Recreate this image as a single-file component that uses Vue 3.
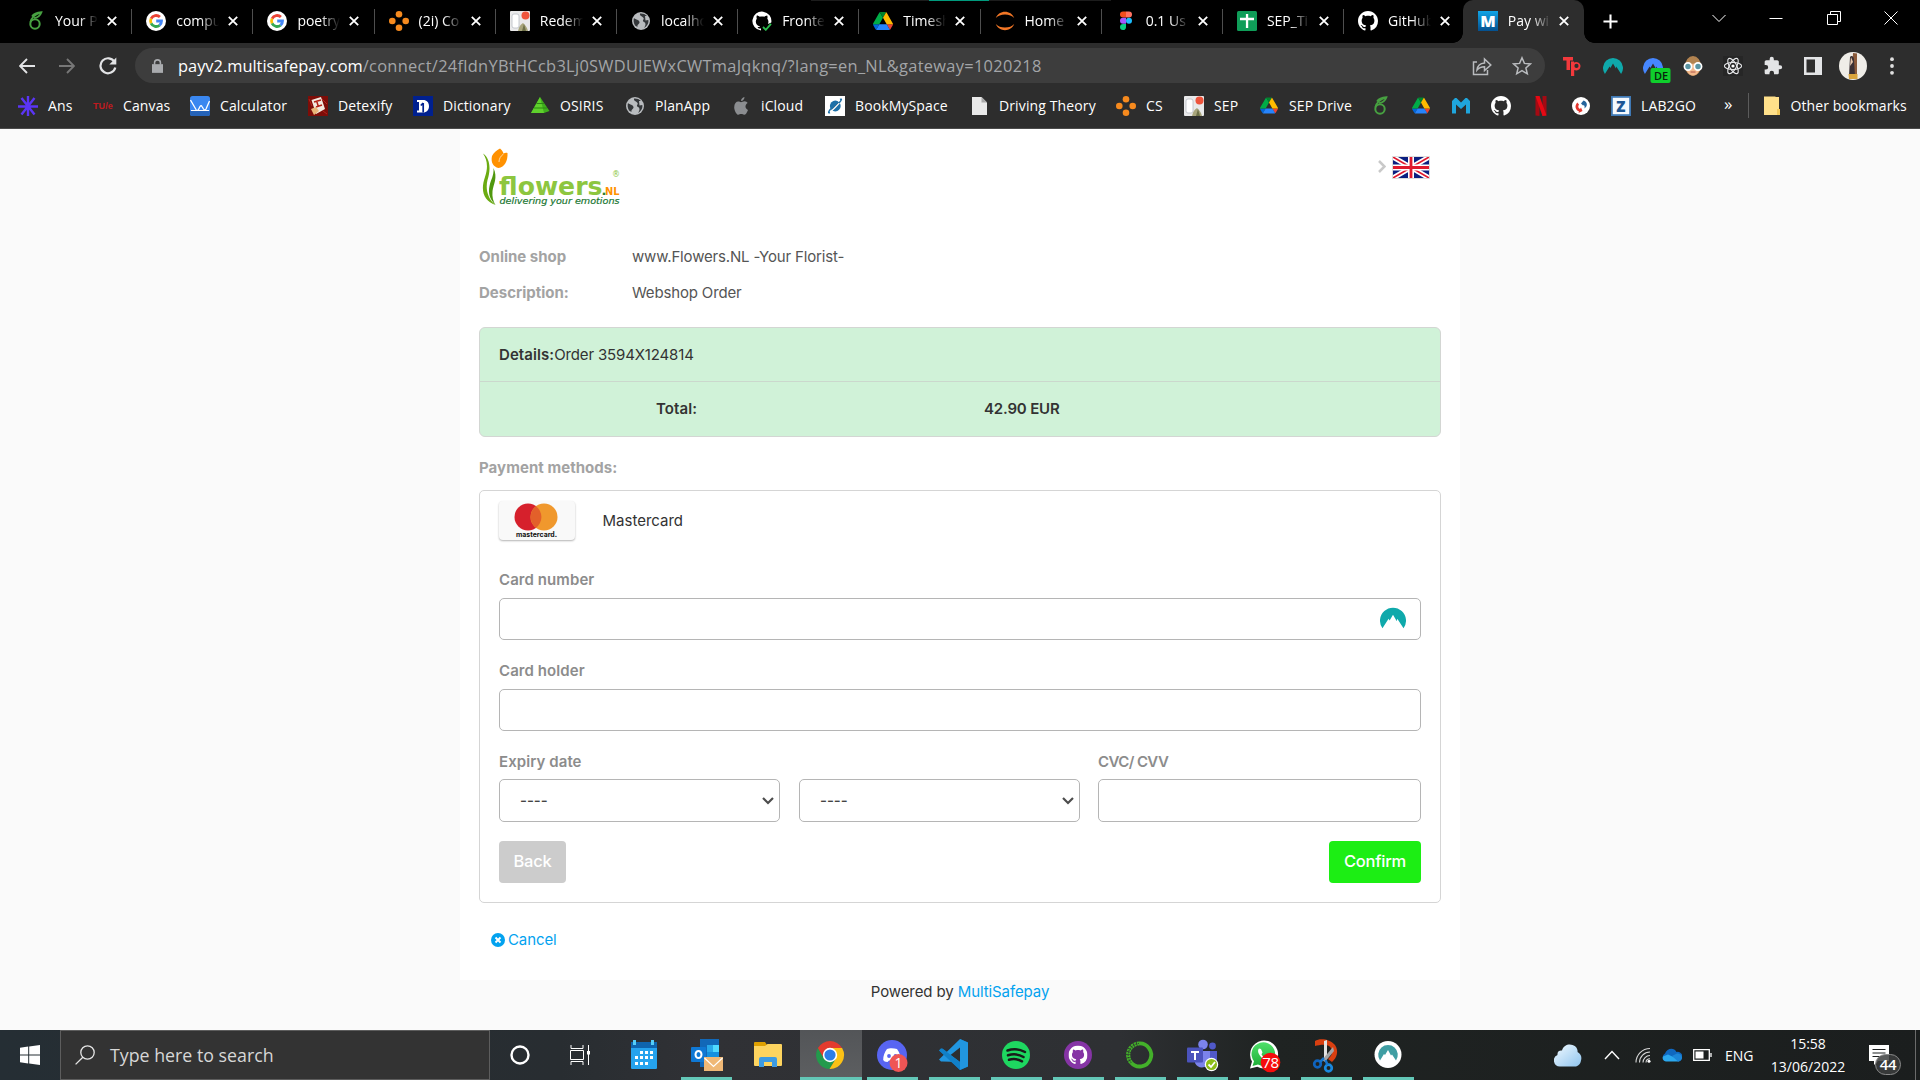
<script setup>
const tabs = [
  { icon: 'overleaf', title: 'Your P' },
  { icon: 'google', title: 'compu' },
  { icon: 'google', title: 'poetry' },
  { icon: 'canvas', title: '(2i) Co' },
  { icon: 'sep', title: 'Redem' },
  { icon: 'globe', title: 'localho' },
  { icon: 'ghcheck', title: 'Fronte' },
  { icon: 'drive', title: 'Timesh' },
  { icon: 'jupyter', title: 'Home' },
  { icon: 'figma', title: '0.1 Us' },
  { icon: 'sheets', title: 'SEP_Ti' },
  { icon: 'github', title: 'GitHub' },
  { icon: 'msp', title: 'Pay wi', active: true },
]

const bookmarks = [
  { icon: 'ans', label: 'Ans', width: 75 },
  { icon: 'tue', label: 'Canvas', width: 97 },
  { icon: 'calc', label: 'Calculator', width: 118 },
  { icon: 'detexify', label: 'Detexify', width: 105 },
  { icon: 'dict', label: 'Dictionary', width: 117 },
  { icon: 'osiris', label: 'OSIRIS', width: 95 },
  { icon: 'globe', label: 'PlanApp', width: 106 },
  { icon: 'apple', label: 'iCloud', width: 94 },
  { icon: 'space', label: 'BookMySpace', width: 144 },
  { icon: 'doc', label: 'Driving Theory', width: 147 },
  { icon: 'canvas', label: 'CS', width: 68 },
  { icon: 'sep', label: 'SEP', width: 75 },
  { icon: 'drive', label: 'SEP Drive', width: 111 },
  { icon: 'overleaf', width: 41 },
  { icon: 'drive', width: 40 },
  { icon: 'miro', width: 40 },
  { icon: 'github', width: 40 },
  { icon: 'netflix', width: 40 },
  { icon: 'sync', width: 40 },
  { icon: 'zed', label: 'LAB2GO', width: 110 },
]

const extensions = ['tp', 'nord', 'nordvpn', 'face', 'react', 'puzzle', 'panel']

const apps = [
  { icon: 'calendar' },
  { icon: 'outlook', open: true },
  { icon: 'explorer' },
  { icon: 'chrome', open: true, focused: true },
  { icon: 'discord', open: true },
  { icon: 'vscode', open: true },
  { icon: 'spotify', open: true },
  { icon: 'ghdesktop', open: true },
  { icon: 'anaconda', open: true },
  { icon: 'teams', open: true },
  { icon: 'whatsapp', open: true },
  { icon: 'snip', open: true },
  { icon: 'nordapp', open: true },
]

// Lettering that sits on top of an icon
const marks = { msp: 'M', tue: 'TU/e', zed: 'Z', nordvpn: 'DE', discord: '1', whatsapp: '78' }
</script>

<template>
  <div class="screen">
    <svg class="sprite" width="0" height="0" aria-hidden="true">
      <defs>
        <linearGradient id="g-msp" x1="0" y1="0" x2="0" y2="1"><stop offset="0" stop-color="#12a5e6" /><stop offset="1" stop-color="#04508f" /></linearGradient>
        <linearGradient id="g-cloud" x1="0" y1="0" x2="1" y2="1"><stop offset="0" stop-color="#f2faff" /><stop offset="1" stop-color="#8fc4ee" /></linearGradient>
        <linearGradient id="g-wa" x1="0" y1="0" x2="0" y2="1"><stop offset="0" stop-color="#4fe06a" /><stop offset="1" stop-color="#1faf38" /></linearGradient>
      </defs>

      <symbol id="overleaf" viewBox="0 0 20 20">
        <path d="M15 2C10.500 3 6 7 5.300 11.500M7 5.500C8.500 3 12 1.500 16.500 1.200C15.500 4 13 6.500 9 7" fill="none" stroke="#47a141" stroke-width="1.700" />
        <circle cx="10" cy="13" r="4.700" fill="none" stroke="#47a141" stroke-width="2" />
      </symbol>
      <symbol id="google" viewBox="0 0 20 20">
        <circle cx="10" cy="10" r="10" fill="#fff" />
        <g fill="none" stroke-width="2.800">
          <path d="M5.100 7.600A5.500 5.500 0 0 1 13.900 6.100" stroke="#ea4335" />
          <path d="M5.100 7.600A5.500 5.500 0 0 0 5.100 12.400" stroke="#fbbc05" />
          <path d="M5.100 12.400A5.500 5.500 0 0 0 13.600 14.200" stroke="#34a853" />
          <path d="M13.600 14.200A5.500 5.500 0 0 0 15.500 10H10.200" stroke="#4285f4" />
        </g>
      </symbol>
      <symbol id="canvas" viewBox="0 0 20 20">
        <g fill="#f68a1e"><circle cx="10" cy="3.300" r="3.300" /><circle cx="10" cy="16.700" r="3.300" /><circle cx="3.300" cy="10" r="3.300" /><circle cx="16.700" cy="10" r="3.300" /></g>
      </symbol>
      <symbol id="sep" viewBox="0 0 20 20">
        <rect width="20" height="20" rx="1" fill="#e9e9ea" />
        <rect x="2" y="3" width="7" height="14" rx="2" fill="#fff" stroke="#b9bcc4" stroke-width=".8" />
        <path d="M8 20C9 16 10 14 13 12C15 14 17 16 18 20Z" fill="#a8a57c" /><path d="M12 20L14 13L16 20Z" fill="#6d7048" />
        <circle cx="15.500" cy="4.500" r="4" fill="#ee543c" />
      </symbol>
      <symbol id="globe" viewBox="0 0 20 20">
        <circle cx="10" cy="10" r="9" fill="#b9bcbf" />
        <path d="M3 7C5 9 8 8.500 8.500 11C8.800 13 6 13 6.500 16L4 14.500C2.500 12 2.300 9 3 7ZM9 2.500C8.500 5 11 5 12.500 7C13.500 8.500 10.500 9.500 13 11C15 11.800 15 14 13 17C16 15.500 18 12 17.300 9L14.500 9.500L14 5L16 5C14 3 12 2.300 9 2.500Z" fill="#34373a" />
      </symbol>
      <symbol id="github" viewBox="0 0 16 16">
        <path fill="#fff" d="M8 0C3.580 0 0 3.580 0 8c0 3.540 2.290 6.530 5.470 7.590.4.070.55-.17.55-.38 0-.19-.01-.82-.01-1.490-2.010.37-2.530-.49-2.690-.94-.09-.23-.48-.94-.82-1.130-.28-.15-.68-.52-.01-.53.63-.01 1.080.58 1.230.82.72 1.210 1.870.87 2.330.66.07-.52.28-.87.51-1.070-1.780-.2-3.640-.89-3.640-3.950 0-.87.31-1.590.82-2.150-.08-.2-.36-1.020.08-2.120 0 0 .67-.21 2.200.82.64-.18 1.320-.27 2-.27s1.360.09 2 .27c1.530-1.040 2.200-.82 2.200-.82.44 1.100.16 1.920.08 2.120.51.56.82 1.270.82 2.150 0 3.070-1.870 3.750-3.650 3.950.29.25.54.73.54 1.480 0 1.070-.01 1.930-.01 2.200 0 .21.15.46.55.38A8 8 0 0 0 16 8c0-4.420-3.580-8-8-8z" />
      </symbol>
      <symbol id="ghcheck" viewBox="0 0 20 20">
        <path d="M9 19.500A9.500 9.500 0 1 1 19.300 11.500L16 13C17 10 16 8.500 15.300 7.700C15.600 6.500 15.600 5.500 15.200 4.500C14 4.500 13 5.300 12.400 5.700C11 5.300 9 5.300 7.700 5.700C7 5.200 6 4.500 4.800 4.500C4.500 5.500 4.400 6.500 4.800 7.700C3 10 3.500 14.500 8 15.200C7.500 16 7 16.300 5.500 16C6.500 17.500 7 17.800 9 17.500Z" fill="#fff" />
        <path d="M11 16L13.800 18.800L19 12.800" fill="none" stroke="#2cbe4e" stroke-width="1.800" />
      </symbol>
      <symbol id="drive" viewBox="0 0 87.300 78">
        <path d="m6.600 66.850 3.850 6.650c.8 1.400 1.950 2.500 3.300 3.300l13.750-23.800h-27.500c0 1.550.4 3.100 1.200 4.500z" fill="#0066da" />
        <path d="m43.650 25-13.750-23.800c-1.350.8-2.500 1.900-3.300 3.300l-25.400 44a9.060 9.060 0 0 0-1.200 4.500h27.500z" fill="#00ac47" />
        <path d="m73.550 76.800c1.350-.8 2.500-1.900 3.300-3.300l1.600-2.750 7.650-13.250c.8-1.400 1.200-2.950 1.200-4.500h-27.500l5.850 11.500z" fill="#ea4335" />
        <path d="m43.650 25 13.750-23.800c-1.350-.8-2.900-1.200-4.500-1.200h-18.500c-1.600 0-3.150.45-4.500 1.200z" fill="#00832d" />
        <path d="m59.800 53h-32.300l-13.750 23.800c1.350.8 2.900 1.200 4.500 1.200h50.800c1.600 0 3.150-.45 4.500-1.200z" fill="#2684fc" />
        <path d="m73.400 26.500-12.700-22c-.8-1.400-1.950-2.500-3.300-3.300l-13.750 23.800 16.150 28h27.450c0-1.550-.4-3.100-1.200-4.500z" fill="#ffba00" />
      </symbol>
      <symbol id="jupyter" viewBox="0 0 20 20">
        <path d="M.8 7C2.500 3 6 .8 10 .8S17.500 3 19.200 7C17 4.600 14 3.400 10 3.400S3 4.600.8 7ZM.8 13C2.500 17 6 19.200 10 19.200S17.500 17 19.200 13C17 15.400 14 16.600 10 16.600S3 15.400.8 13Z" fill="#f37726" />
      </symbol>
      <symbol id="figma" viewBox="0 0 20 20">
        <path d="M7 0.500H10V6.500H7A3 3 0 0 1 7 .5Z" fill="#f24e1e" /><path d="M10 .5H13A3 3 0 0 1 13 6.500H10Z" fill="#ff7262" />
        <path d="M7 6.800H10V12.800H7A3 3 0 0 1 7 6.800Z" fill="#a259ff" /><circle cx="13" cy="9.800" r="3" fill="#1abcfe" /><path d="M7 13H10V16.200A3 3 0 1 1 7 13Z" fill="#0acf83" />
      </symbol>
      <symbol id="sheets" viewBox="0 0 20 20"><rect width="20" height="20" rx="1.500" fill="#0f9d58" /><path d="M8.900 3H11.200V6.800H17V9.200H11.200V17H8.900V9.200H3V6.800H8.900Z" fill="#fff" /></symbol>
      <symbol id="msp" viewBox="0 0 20 20"><rect width="20" height="20" fill="url(#g-msp)" /></symbol>
      <symbol id="ans" viewBox="0 0 20 20"><path d="M10 0V20M0 10.500H20M3.500 2L16.500 18.500M16.500 2L3.500 18.500" stroke="#5b35f5" stroke-width="2.400" /></symbol>
      <symbol id="calc" viewBox="0 0 20 20"><rect width="20" height="20" rx="2.500" fill="#3a87f0" /><path d="M0 15H20V17.500A2.500 2.500 0 0 1 17.500 20H2.500A2.500 2.500 0 0 1 0 17.500Z" fill="#2563b8" /><path d="M.5 4L6 13.500C7 15 8 14.500 8.500 13.500L10 10.500C10.700 9.500 11.500 9.500 12 10.500L13.500 13C14.500 14.500 15.500 14 16 13L19.500 5" fill="none" stroke="#fff" stroke-width="1.300" /><path d="M1 14.500H19" stroke="#fff" stroke-width="1" /></symbol>
      <symbol id="detexify" viewBox="0 0 20 20"><rect width="20" height="20" fill="#7d0d08" /><path d="M3.500 4L13 1L17 13L8 18Z" fill="#f3e9df" /><path d="M6 6L13 4M8.500 4.500L10.500 11M8 11L14 9" stroke="#b22218" stroke-width="1.500" /><path d="M3 13L8 11L11 15L6 19Z" fill="#e9b678" /><path d="M14 3L19 8M15 15L19 18M1 3L4 10" stroke="#b5241c" stroke-width="1" /></symbol>
      <symbol id="dict" viewBox="0 0 20 20"><rect width="20" height="20" fill="#00208f" /><path d="M4 4H10C13.800 4 16 6.500 16 10.200S13.800 16.500 10 16.500H4V14.500H6V6H4Z" fill="#fff" /><path d="M10.200 7V16.500M7.800 9.500L10.200 7" fill="none" stroke="#00208f" stroke-width="1.700" /></symbol>
      <symbol id="osiris" viewBox="0 0 20 20"><path d="M10 1L19.500 15L14 17H1Z" fill="#3fae1d" /><path d="M10 1L1 17H14Z" fill="#5fd02c" /><path d="M6.500 7.500H14M4 12H17" stroke="#2c8a12" stroke-width="1" /></symbol>
      <symbol id="apple" viewBox="0 0 20 20"><path d="M13.500 1C13.500 3 12 5 10 5C10 3 11.500 1.500 13.500 1ZM10 6.300C11 6.300 12 5.300 13.600 5.300C15 5.300 16 6 16.600 7C13.500 9 14 12.600 17 13.900C16 16.500 14.600 18.800 13.200 18.800C12 18.800 11.600 18.100 10.200 18.100S8.300 18.800 7.300 18.800C5.500 18.800 3.200 14.500 3.200 11.200C3.200 7.500 5.300 5.600 7.200 5.600C8.400 5.600 9.200 6.300 10 6.300Z" fill="#8b8d90" /></symbol>
      <symbol id="space" viewBox="0 0 20 20"><rect width="20" height="20" fill="#fff" /><circle cx="10.300" cy="10" r="5.400" fill="#1d70a8" /><path d="M3.500 17C6 16 14 8 17 3.500" stroke="#fff" stroke-width="1.300" /><path d="M6 12.500C3 16 3 17.500 5 16.500M14 7C17 3.500 17 2.500 15 3.500" fill="none" stroke="#1d70a8" stroke-width="1.400" /></symbol>
      <symbol id="doc" viewBox="0 0 20 20"><path d="M3 1H12.500L18 6.500V19H3Z" fill="#e9e9e9" /><path d="M12.500 1L18 6.500H12.500Z" fill="#a9a9a9" /></symbol>
      <symbol id="miro" viewBox="0 0 20 20"><path d="M1 17.500V5L4 2H5.500L10 6.500L14.500 2H16L19 5V17.500H15V8.500L10 13L5 8.500V17.500Z" fill="#1fa6dd" /></symbol>
      <symbol id="netflix" viewBox="0 0 20 20"><path d="M4.500 0H8.500V20L4.500 19.500Z" fill="#a50a13" /><path d="M11.500 0H15.500V19.500L11.500 20Z" fill="#a50a13" /><path d="M4.500 0H8.500L15.500 19.500L11.500 20Z" fill="#e50914" /></symbol>
      <symbol id="sync" viewBox="0 0 20 20"><circle cx="10" cy="10" r="9" fill="#fff" /><path d="M12.500 4.500L10 7.500L12 9.500C13 8.500 14 9.500 13.500 12.500C17.500 9.500 16 5.500 12.500 4.500Z" fill="#24649c" /><path d="M6.300 6.500C3.500 9.500 4 13.500 8 15.500L7.500 17L11.500 15L10 11.500L9 13C7.500 12 6.500 10.500 8 8.500Z" fill="#e3342c" /></symbol>
      <symbol id="zed" viewBox="0 0 20 20"><rect width="20" height="20" fill="#b9d4ec" /><rect x=".9" y=".9" width="18.200" height="18.200" fill="#f5f9fd" stroke="#3f79b5" stroke-width="1.800" /></symbol>
      <symbol id="folder" viewBox="0 0 20 20"><path d="M2 .5H13.500V1H17V13H18V19H2Z" fill="#ffe08a" /><path d="M15 13H18V19H15Z" fill="#f3c95a" /></symbol>

      <symbol id="tp" viewBox="0 0 20 20"><path d="M0 1H10V4.500H7V14H3.500V4.500H0Z" fill="#f2393c" /><path d="M8 5.500H11V6.500A4.300 4.300 0 1 1 11.200 14V20H8ZM13.500 7.800A2 2 0 1 0 13.500 12A2 2 0 1 0 13.500 7.800Z" fill="#f2393c" fill-rule="evenodd" /></symbol>
      <symbol id="nord" viewBox="0 0 20 20"><path d="M1.900 17.900A10 10 0 1 1 18.100 17.900L13.300 10.500L12.900 12.500L10 7.500L7.400 12L6.600 10.600Z" fill="#0fa9ab" /></symbol>
      <symbol id="nordvpn" viewBox="0 0 28 28"><path d="M1.900 17.900A10 10 0 1 1 18.100 17.900L13.300 10.500L12.900 12.500L10 7.500L7.400 12L6.600 10.600Z" fill="#4687ff" /><rect x="7.500" y="12" width="20" height="15" rx="2" fill="#0fcf2c" /></symbol>
      <symbol id="face" viewBox="0 0 20 20"><ellipse cx="10" cy="10" rx="8" ry="10" fill="#b28350" /><path d="M3.500 9C8 8 13 6 16.500 9V13C16 17 13 19.500 10 19.500S4 17 3.500 13Z" fill="#f3b98c" /><circle cx="5" cy="10.500" r="3.600" fill="#5b95a3" stroke="#fff" stroke-width="1.700" /><circle cx="15" cy="10.500" r="3.600" fill="#5b95a3" stroke="#fff" stroke-width="1.700" /><path d="M7.500 16H12.500" stroke="#b0554a" stroke-width="1" /></symbol>
      <symbol id="react" viewBox="0 0 20 20"><rect width="20" height="20" fill="#262626" /><g fill="none" stroke="#e9eaec" stroke-width="1.100"><ellipse cx="10" cy="10" rx="8.600" ry="3.500" /><ellipse cx="10" cy="10" rx="8.600" ry="3.500" transform="rotate(60 10 10)" /><ellipse cx="10" cy="10" rx="8.600" ry="3.500" transform="rotate(120 10 10)" /></g><circle cx="10" cy="10" r="1.600" fill="#fff" /></symbol>
      <symbol id="puzzle" viewBox="0 0 24 24"><path fill="#e3e4e6" d="M20.500 11H19V7c0-1.100-.9-2-2-2h-4V3.500a2.500 2.500 0 0 0-5 0V5H4c-1.100 0-2 .9-2 2v3.800h1.500a2.700 2.700 0 0 1 0 5.400H2V20c0 1.100.9 2 2 2h3.800v-1.500a2.700 2.700 0 0 1 5.400 0V22H17c1.100 0 2-.9 2-2v-4h1.500a2.500 2.500 0 0 0 0-5z" /></symbol>
      <symbol id="panel" viewBox="0 0 20 20"><path d="M1 1H19V19H1ZM3.500 3.500V16.500H12V3.500Z" fill="#e3e4e6" fill-rule="evenodd" /></symbol>

      <symbol id="calendar" viewBox="0 0 36 36"><path d="M5 5H31V13H5Z" fill="#0f64ad" /><path d="M5 11H31V30A1.500 1.500 0 0 1 29.500 32H6.500A1.500 1.500 0 0 1 5 30Z" fill="#25a3ee" /><path d="M8.500 3V8M26.500 3V8" stroke="#55cdf7" stroke-width="3" /><g fill="#fff"><path d="M14 14h3v3h-3zM19 14h3v3h-3zM24 14h3v3h-3zM9 19h3v3h-3zM14 19h3v3h-3zM19 19h3v3h-3zM24 19h3v3h-3zM9 25h3v3h-3zM14 25h3v3h-3zM19 25h3v3h-3z" /></g></symbol>
      <symbol id="outlook" viewBox="0 0 36 36"><path d="M12 2H31V30H12Z" fill="#1268b8" /><path d="M19 8H25V15H19Z" fill="#28a8ea" /><path d="M25 8H31V15H25Z" fill="#50d9ff" /><path d="M19 15H31V22H19Z" fill="#1490df" /><rect x="3" y="10" width="15" height="15" rx="1" fill="#0f78d4" /><ellipse cx="10.500" cy="17.500" rx="3" ry="3.600" fill="none" stroke="#fff" stroke-width="2" /><path d="M16 20H35V34H16Z" fill="#efb876" /><path d="M16.500 21L25.500 29.500L34.500 21" fill="none" stroke="#fff" stroke-width="1.200" /></symbol>
      <symbol id="explorer" viewBox="0 0 36 36"><path d="M4 6A1 1 0 0 1 5 5H15L17 8V10H4Z" fill="#dfa000" /><path d="M4 9H15L17.500 7H31A1 1 0 0 1 32 8V28A1 1 0 0 1 31 29H5A1 1 0 0 1 4 28Z" fill="#fdd45f" /><path d="M9 30V22A2 2 0 0 1 11 20H25A2 2 0 0 1 27 22V30H22V25H14V30Z" fill="#3d9be2" /></symbol>
      <symbol id="chrome" viewBox="0 0 36 36"><path d="M5.900 11A14 14 0 0 1 30.100 11H18Z" fill="#e33b2e" /><path d="M5.900 11A14 14 0 0 0 17.500 32L24 21.500H12Z" fill="#239a4c" /><path d="M18 11H30.100A14 14 0 0 1 17.500 32L24 21.500Z" fill="#fbc116" /><path d="M5.900 11L12 21.500L18 11Z" fill="#e33b2e" /><circle cx="18" cy="18" r="7.200" fill="#fff" /><circle cx="18" cy="18" r="5.600" fill="#2c7de8" /></symbol>
      <symbol id="discord" viewBox="0 0 36 36"><circle cx="18" cy="18" r="15" fill="#5865f2" /><path d="M13 12C15 11 20 11 23 12C26 16 27 20 26.500 23.500C24.500 25 23 25.300 22.500 25L21.500 23.500H15L13.500 25C11 25 10 24 9.200 23C9.200 19 10.500 15 13 12Z" fill="#fff" /><circle cx="15" cy="19" r="1.900" fill="#5865f2" /><circle cx="21.500" cy="19" r="1.900" fill="#5865f2" /><circle cx="24.500" cy="26" r="9" fill="#ef5555" /></symbol>
      <symbol id="vscode" viewBox="0 0 36 36"><path d="M24 2L32 5.500V29.500L24 33L5 15L3 13.500L5 11.500H6.500L24 25Z" fill="#0a72b8" /><path d="M24 2L32 5.500V29.500L24 33V25L6.500 24.500H5L3 22.500L24 2Z" fill="#2196e0" /><path d="M24 10.500V25L14.500 18Z" fill="#2c2e31" /><path d="M3 13.500L5 11.500L7 12L24 25V33L3 13.500Z" fill="#1180c8" /></symbol>
      <symbol id="spotify" viewBox="0 0 36 36"><circle cx="18" cy="18" r="14" fill="#1ed760" /><path d="M9.500 13.500C15 11.500 22 12.300 27 15M10 18.300C15 16.800 21 17.300 25.500 20M11 22.800C15.500 21.500 20 22 24 24.300" fill="none" stroke="#191c1a" stroke-width="2.500" stroke-linecap="round" /></symbol>
      <symbol id="ghdesktop" viewBox="0 0 36 36"><circle cx="18" cy="18" r="14" fill="#8534a5" /><use href="#github" x="8.500" y="8.500" width="19" height="19" /></symbol>
      <symbol id="anaconda" viewBox="0 0 36 36"><path d="M17 6.500A11.500 11.500 0 1 1 9 25.500" fill="none" stroke="#43b02a" stroke-width="3.800" /><path d="M9 25.500A11.500 11.500 0 0 1 17 6.500" fill="none" stroke="#43b02a" stroke-width="4.200" stroke-dasharray="2.200 .7" /><path d="M9 25.500A11.500 11.500 0 0 1 17 6.500" fill="none" stroke="#2c2e30" stroke-width="1" stroke-dasharray="1.200 1.200" /></symbol>
      <symbol id="teams" viewBox="0 0 36 36"><circle cx="19" cy="7.500" r="4.800" fill="#7b83eb" /><circle cx="28.500" cy="9" r="3.400" fill="#5059c9" /><path d="M24 14H33V22A6 6 0 0 1 24 27Z" fill="#5059c9" /><path d="M11 14H26V24A8 8 0 0 1 11 26Z" fill="#7b83eb" /><rect x="3" y="10.500" width="16" height="15" rx="1" fill="#4b53bc" /><path d="M7 14H15V16H12V23H10V16H7Z" fill="#fff" /><circle cx="27.500" cy="27.500" r="6.700" fill="#fff" /><circle cx="27.500" cy="27.500" r="5.500" fill="#8cbd18" /><path d="M24.500 27.500L27 30L31 25" fill="none" stroke="#fff" stroke-width="1.800" /></symbol>
      <symbol id="whatsapp" viewBox="0 0 36 36"><path d="M4 31.500L6 24.500A14 14 0 1 1 11.300 29.700Z" fill="#fff" /><path d="M6.500 29L8 24.300A11.800 11.800 0 1 1 12 27.600Z" fill="url(#g-wa)" /><path d="M13 11.500C11 13.500 12.500 17.500 15.500 20.500S22 25 24 22.500L21 20L19 21C17.500 20.300 16 18.500 15.500 17.300L16.500 15.500L15 12Z" fill="#fff" /><circle cx="24.500" cy="25.500" r="9.800" fill="#f60c0c" /></symbol>
      <symbol id="snip" viewBox="0 0 36 36"><path d="M7 4C12 .5 22 2 27 8C31 14 29 21 24 25L20 22C26 17 25 11 20 8.500C16 7 11 8 7 9Z" fill="#d93f10" /><path d="M16 4L19 3V23L16 24Z" fill="#e2e2e2" /><path d="M25 10L14 23L17 25L26 14Z" fill="#a4a4a6" /><circle cx="9.500" cy="27" r="3.300" fill="none" stroke="#0f63bd" stroke-width="2.700" /><circle cx="20.500" cy="31" r="3.300" fill="none" stroke="#1989df" stroke-width="2.700" /><path d="M12 25L16 21M19.500 28L17.500 23" stroke="#1674cc" stroke-width="2.500" /></symbol>
      <symbol id="nordapp" viewBox="0 0 36 36"><circle cx="18" cy="17.500" r="13.500" fill="#fff" /><path d="M10 23.500A9.800 9.800 0 1 1 26 23.500L22 17.500L21 18.500L18 13L15 18L14 17Z" fill="#3f9ea3" /></symbol>
    </svg>

    <header class="tabstrip">
      <div v-for="(tab, i) in tabs" :key="i" class="tab" :class="{ active: tab.active, before: i === 11 }">
        <span class="icon favicon" :class="'i-' + tab.icon">
          <svg><use :href="'#' + tab.icon" /></svg>
          <i v-if="marks[tab.icon]" class="mark">{{ marks[tab.icon] }}</i>
        </span>
        <span class="tab-title">{{ tab.title }}</span>
        <svg class="tab-close" viewBox="0 0 10 10"><path d="M.8.800L9.200 9.200M9.200.800L.8 9.200" /></svg>
      </div>
      <svg class="new-tab" viewBox="0 0 16 16"><path d="M8 .5V15.500M.5 8H15.500" /></svg>
      <div class="window-buttons">
        <svg viewBox="0 0 14 14"><path d="M.5 4L7 10.500L13.500 4" /></svg>
        <svg viewBox="0 0 14 14"><path d="M.5 7.500H13.500" /></svg>
        <svg viewBox="0 0 14 14"><path d="M.5 3.500H10.500V13.500H.5ZM3.500 3.500V.5H13.500V10.500H10.500" /></svg>
        <svg viewBox="0 0 14 14"><path d="M.5.500L13.500 13.500M13.500.500L.5 13.500" /></svg>
      </div>
    </header>

    <div class="toolbar">
      <svg class="nav" viewBox="0 0 16 16"><path d="M16 8H1.500M8 1L1 8L8 15" /></svg>
      <svg class="nav dim" viewBox="0 0 16 16"><path d="M0 8H14.500M8 1L15 8L8 15" /></svg>
      <svg class="nav reload" viewBox="0 0 18 18"><path d="M15.500 5A7.500 7.500 0 1 0 16.300 10.500" /><path d="M17.300.5V7.500H10.300Z" class="solid" /></svg>
      <div class="omnibox">
        <svg class="lock" viewBox="0 0 12 15"><path d="M0 5.500H12V15H0Z" fill="#a9abae" /><path d="M2.800 6V4A3.200 3.200 0 0 1 9.200 4V6" fill="none" stroke="#a9abae" stroke-width="1.700" /></svg>
        <span class="url"><b>payv2.multisafepay.com</b><span class="path">/connect/24fldnYBtHCcb3Lj0SWDUlEWxCWTmaJqknq/?lang=en_NL&amp;gateway=1020218</span></span>
        <svg class="share" viewBox="0 0 20 20"><path d="M5 6H1.500V18.500H15.500V14M5 14C5.500 9.500 8 7.300 12.500 7V3L18.800 9L12.500 14.500V10.700C9 10.700 7 11.500 5 14Z" /></svg>
        <svg class="star" viewBox="0 0 20 20"><path d="M10 1.800L12.400 7.400L18.500 7.900L13.900 11.900L15.300 17.800L10 14.700L4.700 17.800L6.100 11.900L1.500 7.900L7.600 7.400Z" /></svg>
      </div>
      <div class="extensions">
        <span v-for="ext in extensions" :key="ext" class="icon ext" :class="'i-' + ext">
          <svg><use :href="'#' + ext" /></svg>
          <i v-if="marks[ext]" class="mark">{{ marks[ext] }}</i>
        </span>
      </div>
      <svg class="avatar" viewBox="0 0 28 28"><circle cx="14" cy="14" r="14" fill="#efede8" /><path d="M14 1L18 1.500V25H13Z" fill="#8b5a3a" /><path d="M11 5C12.500 3 15 4 15 8L16 24H10Z" fill="#3a3034" /><path d="M9.500 22H18.500V27H10Z" fill="#d9a43c" /><path d="M12 5L14 10L11 14Z" fill="#e8c9ae" /></svg>
      <svg class="menu" viewBox="0 0 4 18"><circle cx="2" cy="2.200" r="1.900" /><circle cx="2" cy="9" r="1.900" /><circle cx="2" cy="15.800" r="1.900" /></svg>
    </div>

    <nav class="bookmarks">
      <div v-for="(b, i) in bookmarks" :key="i" class="bookmark" :style="{ width: b.width + 'px' }">
        <span class="icon favicon" :class="'i-' + b.icon">
          <svg v-if="b.icon !== 'tue'"><use :href="'#' + b.icon" /></svg>
          <i v-if="marks[b.icon]" class="mark">{{ marks[b.icon] }}</i>
        </span>
        <span v-if="b.label">{{ b.label }}</span>
      </div>
      <span class="overflow">»</span>
      <div class="bookmark other">
        <span class="icon favicon"><svg><use href="#folder" /></svg></span>
        <span>Other bookmarks</span>
      </div>
    </nav>

    <main class="page">
      <section class="sheet">
        <div class="shop-header">
          <svg class="logo" width="140" height="62" viewBox="0 0 140 62">
            <path d="M2 5.500C10 11 9.500 23 6.500 32C4.500 40 6 50 14.500 57C3 53-1 43 4 29C7.500 19 6 11 2 5.500Z" fill="#6bab12" />
            <path d="M12.500 20C17 30 12.500 36 11.500 43C11 49 12 53 14.500 57C8.500 51 7 45 8.500 38C10 31 13 28 12.500 20Z" fill="#4f980e" />
            <path d="M19 .5C21 2.500 22 3.500 22.500 5.500C24 4.500 25.500 4.500 26.500 5C27 12.500 23.500 19.500 17.500 20C12.500 19 9.500 14.500 11 8C12.500 4.500 15.500 2.500 19 .5Z" fill="#ff9100" />
            <path d="M22.500 6C19.500 8 18 11 18 14" fill="none" stroke="#ffd9a3" stroke-width="1" />
            <text x="18" y="47" textLength="103.500" lengthAdjust="spacingAndGlyphs" class="brand">flowers</text>
            <text x="120.500" y="47" textLength="4" class="dot">.</text>
            <text x="124" y="47" textLength="14.500" lengthAdjust="spacingAndGlyphs" class="tld">NL</text>
            <text x="131" y="29" class="reg">®</text>
            <text x="18.500" y="56.300" textLength="120" lengthAdjust="spacingAndGlyphs" class="tagline">delivering your emotions</text>
          </svg>
          <div class="language">
            <svg class="lang-arrow" viewBox="0 0 8 13"><path d="M1 1L6.500 6.500L1 12" /></svg>
            <svg class="flag" viewBox="0 0 36 21">
              <rect width="36" height="21" fill="#0b1f80" />
              <path d="M0 0L36 21M36 0L0 21" stroke="#fff" stroke-width="5" />
              <path d="M0 0L36 21M36 0L0 21" stroke="#e0182d" stroke-width="1.600" />
              <path d="M18 0V21M0 10.500H36" stroke="#fff" stroke-width="6" />
              <path d="M18 0V21M0 10.500H36" stroke="#e0182d" stroke-width="2.800" />
            </svg>
          </div>
        </div>

        <dl class="info">
          <dt>Online shop</dt><dd>www.Flowers.NL -Your Florist-</dd>
          <dt>Description:</dt><dd>Webshop Order</dd>
        </dl>

        <div class="details">
          <div class="details-row"><b>Details:</b>Order 3594X124814</div>
          <div class="details-row total"><b>Total:</b><b class="amount">42.90 EUR</b></div>
        </div>

        <h2>Payment methods:</h2>

        <form class="method" @submit.prevent>
          <div class="method-head">
            <span class="card-logo">
              <svg width="44" height="36" viewBox="0 0 44 36">
                <circle cx="14" cy="14" r="13.500" fill="#d6202c" /><circle cx="30" cy="14" r="13.500" fill="#f0982d" />
                <path d="M22 3.200A13.500 13.500 0 0 1 22 24.800A13.500 13.500 0 0 1 22 3.200Z" fill="#e3602a" />
                <text x="2" y="33.800" textLength="41" lengthAdjust="spacingAndGlyphs">mastercard.</text>
              </svg>
            </span>
            <span>Mastercard</span>
          </div>

          <label>Card number</label>
          <div class="field with-icon"><svg class="field-icon"><use href="#nord" /></svg></div>
          <label>Card holder</label>
          <div class="field"></div>

          <div class="columns">
            <div class="expiry">
              <label>Expiry date</label>
              <div class="selects">
                <div v-for="n in 2" :key="n" class="field select">
                  <span>----</span>
                  <svg viewBox="0 0 12 8"><path d="M1 1L6 6L11 1" /></svg>
                </div>
              </div>
            </div>
            <div class="cvc">
              <label>CVC/ CVV</label>
              <div class="field tall"></div>
            </div>
          </div>

          <div class="actions">
            <button class="back">Back</button>
            <button class="confirm">Confirm</button>
          </div>
        </form>

        <a class="cancel">
          <svg viewBox="0 0 14 14"><circle cx="7" cy="7" r="7" /><path d="M4.500 4.500L9.500 9.500M9.500 4.500L4.500 9.500" /></svg>
          <span>Cancel</span>
        </a>
      </section>
      <footer>Powered by <a>MultiSafepay</a></footer>
    </main>

    <div class="taskbar">
      <div class="start"><svg viewBox="0 0 20 20"><path d="M0 2.800L8.200 1.600V9.500H0ZM9.200 1.500L20 0V9.500H9.200ZM0 10.500H8.200V18.400L0 17.200ZM9.200 10.500H20V20L9.200 18.500Z" /></svg></div>
      <div class="search">
        <svg viewBox="0 0 20 20"><circle cx="12.500" cy="7.500" r="6.700" /><path d="M7.800 12.200L.6 19.400" /></svg>
        <span>Type here to search</span>
      </div>
      <div class="shell-btn"><svg class="cortana" viewBox="0 0 20 20"><circle cx="10" cy="10" r="8.500" /></svg></div>
      <div class="shell-btn"><svg class="taskview" viewBox="0 0 20 20"><path d="M1 0V3.500H13V0M.5 5.500H13.500V14.500H.5ZM1 20V16.500H13V20M18.500 0V20" /><path d="M17 6H20V9.500H17Z" fill="#fff" stroke="none" /></svg></div>
      <div v-for="app in apps" :key="app.icon" class="app" :class="{ open: app.open, focused: app.focused }">
        <span class="icon" :class="'i-' + app.icon">
          <svg><use :href="'#' + app.icon" /></svg>
          <i v-if="marks[app.icon]" class="mark">{{ marks[app.icon] }}</i>
        </span>
      </div>

      <div class="tray">
        <svg class="weather" viewBox="0 0 28 24"><path d="M6 23.500A6 6 0 0 1 3.500 12C3 8 6 7 8 7.500C9.500 2 15 .5 18.500 2C22.500 3 24 7 23.500 9C27 11 28 14 27 17.500C26.500 21 24 23.500 21 23.500Z" fill="url(#g-cloud)" /></svg>
        <svg class="up" viewBox="0 0 16 10"><path d="M1 9L8 1.500L15 9" /></svg>
        <svg class="wifi" viewBox="0 0 16 16"><path d="M1 15.500A14 14 0 0 1 15 1.500M4.500 15.500A10.500 10.500 0 0 1 15 5M8 15.500A7 7 0 0 1 15 8.500M11 15.500A4 4 0 0 1 15 11.800" /><circle cx="14" cy="14.300" r="1.500" fill="#fff" stroke="none" /></svg>
        <svg class="onedrive" viewBox="0 0 20 14"><path d="M4 13A4 4 0 0 1 3 5.500C5 0 12-1 14.500 4A4.500 4.500 0 0 1 17 13Z" fill="#1068c0" /><path d="M4 13.500C1 13 0 10.500 1 8.500L6 6.500L18 12C17.500 13 16.500 13.500 15.500 13.500Z" fill="#2ba8ee" /><path d="M10 8L15 5.500C18.500 5.500 20 8 20 9.500S19 13.500 16 13.500Z" fill="#1c86d8" /></svg>
        <svg class="battery" viewBox="0 0 19 12"><path d="M.7.700H16.300V11.300H.7ZM18 4V8" /><rect x="2.500" y="2.500" width="8" height="7" fill="#fff" stroke="none" /></svg>
        <span class="lang">ENG</span>
        <div class="clock"><span>15:58</span><span>13/06/2022</span></div>
        <div class="notify">
          <svg viewBox="0 0 20 20"><path d="M0 0H20V16H9L5 20V16H0Z" fill="#fff" /><path d="M3.500 4.500H16.500M3.500 8H16.500M3.500 11.500H12" stroke="#1d2020" stroke-width="1.200" /></svg>
          <span class="badge">44</span>
        </div>
        <i class="peek"></i>
      </div>
    </div>
  </div>
</template>

<style>
body { margin: 0; overflow: hidden; }
</style>

<style scoped>
.screen { width: 1920px; height: 1080px; display: flex; flex-direction: column; overflow: hidden; font-family: "Open Sans", "Noto Sans", sans-serif; }
.screen * { box-sizing: border-box; }
.sprite { position: absolute; }
svg { display: block; flex: none; }

/* icons with optional lettering */
.icon { position: relative; display: block; flex: none; }
.icon > svg { width: 100%; height: 100%; }
.favicon { width: 20px; height: 20px; }
.mark { position: absolute; inset: 0; font-style: normal; text-align: center; white-space: nowrap; color: #fff; }
.i-msp .mark { font-size: 16px; font-weight: 800; line-height: 20px; }
.i-zed .mark { font-size: 15px; font-weight: 800; line-height: 20px; color: #1d5795; }
.i-tue .mark { font: 700 9px/20px "Liberation Sans", sans-serif; color: #c11a1f; }
.i-nordvpn .mark { inset: 12px 0 1px 8px; font-size: 11px; font-weight: 600; line-height: 15px; color: #08230c; }
.i-discord .mark { inset: 17px 2px 1px 15px; font-size: 14px; line-height: 18px; }
.i-whatsapp .mark { inset: 16px 0 0 13px; font-size: 15px; line-height: 19px; letter-spacing: -.3px; }

/* tab strip */
.tabstrip { height: 43px; background: #000 linear-gradient(90deg, #1c1c1c 118px, #009a7d 118px, #009a7d 178px, #1c1c1c 178px) 811px 0 / 300px 1px no-repeat; display: flex; padding-left: 11px; color: #fff; flex: none; }
.tab { width: 121.200px; height: 43px; padding: 0 0 1px 14px; display: flex; align-items: center; position: relative; flex: none; }
.tab:not(.active):not(.before)::after { content: ""; position: absolute; right: 0; top: 9px; width: 1px; height: 25px; background: #4e4e4e; }
.tab.active { background: #2d2d2d; border-radius: 10px 10px 0 0; margin-left: -2.400px; padding-left: 15px; }
.tab.active::before, .tab.active::after { content: ""; position: absolute; bottom: 0; width: 10px; height: 10px; }
.tab.active::before { left: -10px; background: radial-gradient(circle at 0 0, transparent 9.500px, #2d2d2d 10px); }
.tab.active::after { right: -10px; background: radial-gradient(circle at 100% 0, transparent 9.500px, #2d2d2d 10px); }
.tab-title { margin-left: 10px; width: 43px; overflow: hidden; white-space: nowrap; font-size: 14px; line-height: 22px; -webkit-mask-image: linear-gradient(90deg, #000 24px, transparent 43px); mask-image: linear-gradient(90deg, #000 24px, transparent 43px); }
.tab-close { width: 10px; height: 10px; margin-left: 9px; stroke: #fff; stroke-width: 1.800; fill: none; }
.tab.active .tab-close { margin-left: 8px; }
.new-tab { width: 15px; height: 15px; margin: 14px 0 0 19px; stroke: #fff; stroke-width: 2.200; }
.window-buttons { margin: 11px 22px 0 auto; display: flex; gap: 43.500px; }
.window-buttons svg { width: 14px; height: 14px; fill: none; stroke: #fff; stroke-width: 1; }

/* toolbar */
.toolbar { height: 45px; background: #2d2d2d; display: flex; align-items: center; padding: 0 20px 0 19px; flex: none; }
.nav { width: 16px; height: 16px; fill: none; stroke: #e2e3e5; stroke-width: 1.900; margin-right: 24px; }
.nav.dim { stroke: #777; }
.nav.reload { width: 18px; height: 18px; margin-right: 18px; stroke-width: 2.200; }
.nav .solid { fill: #e2e3e5; stroke: none; }
.omnibox { width: 1410px; height: 35px; border-radius: 18px; background: #3d3d3d; display: flex; align-items: center; padding: 0 13px 0 17px; }
.lock { width: 11px; height: 14px; margin-right: 15px; }
.url { font-size: 16.400px; line-height: 24px; color: #fff; white-space: nowrap; }
.url b { font-weight: 400; }
.path { color: #a3a5a8; letter-spacing: .3px; }
.share, .star { width: 20px; height: 20px; fill: none; stroke: #b9bbbe; stroke-width: 1.500; }
.share { margin-left: auto; margin-right: 20px; }
.extensions { display: flex; gap: 20px; margin-left: 18px; height: 20px; }
.ext { width: 20px; height: 20px; }
.i-nordvpn { width: 28px; height: 28px; margin-right: -8px; }
.avatar { width: 28px; height: 28px; margin-left: 16px; }
.menu { width: 4px; height: 18px; margin-left: auto; margin-right: 6px; fill: #e0e0e0; }

/* bookmarks */
.bookmarks { height: 41px; background: #2d2d2d; border-bottom: 1px solid #4b4b4b; display: flex; align-items: center; padding: 0 0 5px 18px; color: #fff; font-size: 14px; letter-spacing: .12px; flex: none; }
.bookmark { display: flex; align-items: center; gap: 10px; flex: none; white-space: nowrap; }
.bookmark .i-drive { width: 18px; height: 17px; margin: 0 1px; }
.overflow { font-size: 17px; line-height: 20px; margin: -4px 0 0 3px; width: 24px; }
.other { border-left: 1px solid #5c5c5c; height: 25px; padding-left: 13px; gap: 8.500px; letter-spacing: .08px; }

/* payment page */
.page { height: 901px; background: #fafafa; font-family: Inter, Roboto, sans-serif; font-size: 15px; letter-spacing: -.1px; color: #333; flex: none; }
.sheet { width: 1000px; height: 851px; margin: 0 auto; padding: 0 19px; background: #fff; }
.shop-header { height: 110px; display: flex; justify-content: space-between; padding: 19px 12px 0 2px; letter-spacing: 0; }
.brand { font: 700 25px "DejaVu Sans", sans-serif; fill: #8dc63f; }
.dot { font: 700 13px "DejaVu Sans", sans-serif; fill: #1d7d36; }
.tld { font: 700 10px "DejaVu Sans", sans-serif; fill: #ff9100; }
.reg { font: 8px "DejaVu Sans", sans-serif; fill: #8dc63f; }
.tagline { font: italic 9.500px "DejaVu Sans", sans-serif; fill: #17752f; stroke: #17752f; stroke-width: .2; }
.language { display: flex; gap: 7px; padding-top: 9px; }
.lang-arrow { width: 8px; height: 13px; margin-top: 3px; fill: none; stroke: #c9c9c9; stroke-width: 2.500; }
.flag { width: 36px; height: 21px; outline: 1px solid #dcdcdc; }
.info { margin: 0 0 16px; display: grid; grid-template-columns: 153px 1fr; line-height: 36px; }
.info dt { font-weight: 700; color: #a3a3a3; letter-spacing: 0; }
.info dd { margin: 0; color: #555; letter-spacing: -.16px; }
.details { height: 110px; border: 1px solid #d3d6d3; border-radius: 6px; background: #d0f2d8; color: #333; }
.details-row { height: 54px; line-height: 54px; padding-left: 19px; letter-spacing: -.15px; }
.details-row b { font-weight: 600; letter-spacing: .08px; }
.details-row .amount { letter-spacing: -.18px; }
.details-row + .details-row { margin-top: -1px; }
.total { border-top: 1px solid #cbd8cd; display: grid; grid-template-columns: 328px 1fr; padding-left: 176px; }
h2 { margin: 0; padding-top: 9px; height: 53px; font-size: 15px; line-height: 44px; font-weight: 700; color: #a3a3a3; letter-spacing: .05px; }
.method { height: 413px; border: 1px solid #d5d5d5; border-radius: 5px; padding: 10px 19px 0; }
.method-head { display: flex; height: 39px; align-items: center; gap: 27.500px; letter-spacing: 0; }
.card-logo { width: 76px; height: 39px; border-radius: 4px; background: #f9f9f9; box-shadow: 0 1px 2px rgba(0, 0, 0, .3); display: flex; justify-content: center; padding: 2px 2px 0 0; }
.card-logo text { font: 700 7px Inter, sans-serif; fill: #111; }
label { display: block; margin: 21px 0 8px; line-height: 20px; font-weight: 600; color: #8c8c8c; letter-spacing: .08px; }
.method-head + label { margin-top: 30px; }
.cvc label { letter-spacing: -.6px; }
.field { height: 42px; border: 1px solid #b5b5b5; border-radius: 5px; background: #fff; }
.with-icon { display: flex; justify-content: flex-end; align-items: center; padding: 0 14px 0 0; }
.field-icon { width: 26px; height: 26px; margin-top: -2px; }
.columns { display: flex; gap: 18px; }
.columns label { margin-bottom: 7px; }
.expiry { width: 581px; }
.cvc { flex: 1; }
.selects { display: flex; gap: 19px; }
.select { flex: 1; height: 43px; display: flex; justify-content: space-between; align-items: center; padding: 0 5px 0 20px; letter-spacing: 0; font-weight: 500; color: #444; }
.select svg { width: 12px; height: 8px; fill: none; stroke: #4d4d4d; stroke-width: 2.200; }
.tall { height: 43px; }
.actions { display: flex; justify-content: space-between; margin-top: 19px; }
button { height: 42px; border: 0; border-radius: 4px; padding: 0 0 2px; color: #fff; font: 500 16.500px Inter, Roboto, sans-serif; letter-spacing: -.25px; }
.back { width: 67px; background: #ccc; }
.confirm { width: 92px; background: #1cee14; }
.cancel { display: flex; align-items: center; gap: 3px; margin: 27px 0 0 12px; line-height: 20px; }
.cancel svg { width: 14px; height: 14px; fill: #03a2ef; stroke: #fff; stroke-width: 1.900; }
.cancel svg circle { stroke: none; }
a { color: #03a2ef; }
footer { text-align: center; line-height: 24px; }

/* taskbar */
.taskbar { height: 50px; display: flex; background: linear-gradient(90deg, #252e34 0, #282d31 560px, #303135 700px, #2e3033 1120px, #1f2322 1270px, #1b1e1e 100%); color: #fff; flex: none; }
.start { width: 60px; display: flex; align-items: center; justify-content: center; }
.start svg { width: 20px; height: 20px; fill: #fff; }
.search { width: 430px; border: 1px solid #5d5d5d; background: #333; display: flex; align-items: center; gap: 15px; padding-left: 14px; font-size: 17.800px; color: #d7d7d7; }
.search span { margin-top: -1px; }
.search svg { width: 20px; height: 20px; fill: none; stroke: #e6e6e6; stroke-width: 1.300; }
.shell-btn { width: 60px; display: flex; align-items: center; justify-content: center; }
.cortana { width: 20px; height: 20px; fill: none; stroke: #fff; stroke-width: 2.400; }
.taskview { width: 20px; height: 20px; fill: none; stroke: #fff; stroke-width: 1; }
.app { width: 62px; display: flex; justify-content: center; padding: 7px 2px 0 0; position: relative; }
.shell-btn + .app { margin-left: 4px; }
.app .icon { width: 36px; height: 36px; }
.app.focused { background: linear-gradient(#535558, #5d5f61); }
.app.open::after { content: ""; position: absolute; left: 5px; right: 6px; bottom: 0; height: 3px; background: #63c7b7; }
.app.focused::after { left: 0; right: 0; }
.tray { margin-left: auto; display: flex; align-items: center; font-size: 14px; padding-right: 4px; }
.weather { width: 28px; height: 24px; margin-right: 22px; }
.up { width: 16px; height: 10px; fill: none; stroke: #fff; stroke-width: 1.400; margin-right: 15px; }
.wifi { width: 16px; height: 16px; fill: none; stroke: #d8d8d8; stroke-width: 1.100; margin-right: 11px; }
.onedrive { width: 20px; height: 14px; margin-right: 11px; }
.battery { width: 19px; height: 12px; fill: none; stroke: #fff; stroke-width: 1.300; margin-right: 13px; }
.lang { width: 30px; }
.clock { width: 76px; margin: 0 23px 0 15px; display: flex; flex-direction: column; align-items: center; line-height: 23px; white-space: nowrap; }
.notify { width: 33px; height: 50px; position: relative; padding-top: 15px; }
.notify svg { width: 20px; height: 20px; }
.badge { position: absolute; left: 6px; top: 24px; width: 26px; height: 21px; border: 1px solid #8a8a8a; border-radius: 11px; background: rgba(60, 62, 62, .85); font-size: 15px; font-weight: 600; line-height: 19px; text-align: center; letter-spacing: -.3px; }
.peek { width: 1px; height: 50px; margin-left: 13px; background: #6b6b6b; }
</style>
